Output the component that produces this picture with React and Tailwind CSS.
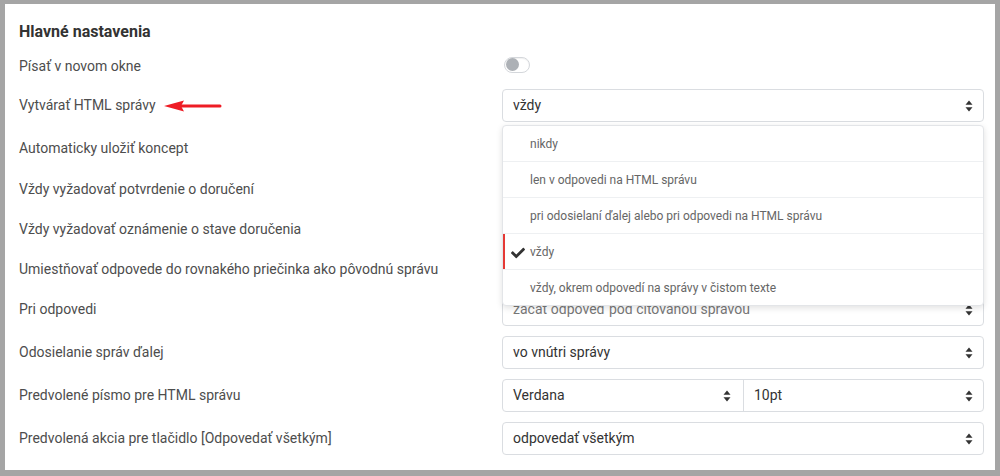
import React from "react";
import { FaCheck } from "react-icons/fa";

function SortIcon() {
  return (
    <svg width="8" height="12" viewBox="0 0 8 12" className="shrink-0">
      <path d="M4 0.5 L7.5 4.8 L0.5 4.8 Z" fill="#333" />
      <path d="M4 11.5 L7.5 7.2 L0.5 7.2 Z" fill="#333" />
    </svg>
  );
}

function Select({ value, className = "" }) {
  return (
    <div
      className={
        "flex h-[33px] w-full items-center justify-between rounded-[4px] border border-[#dadde1] bg-white pl-[10px] pr-[10px] text-[14px] text-[#333] " +
        className
      }
    >
      <span>{value}</span>
      <SortIcon />
    </div>
  );
}

function Toggle() {
  return (
    <div className="flex h-[16px] w-[26px] items-center rounded-full border border-[#d4d7db] bg-white pl-[1px] shadow-[inset_0_1px_1px_rgba(0,0,0,0.06)]">
      <div className="h-[13px] w-[13px] rounded-full bg-[#adb1b6]" />
    </div>
  );
}

function Row({ label, children, h, select = false, extra = null }) {
  return (
    <div className={"flex items-center " + h}>
      <div
        className={
          "w-[483px] shrink-0 text-[14px] text-[#4d4d4d] " +
          (select ? "" : "pt-[3px]")
        }
      >
        {label}
        {extra}
      </div>
      <div className="relative w-[482px] shrink-0">{children}</div>
    </div>
  );
}

const menuItems = [
  "nikdy",
  "len v odpovedi na HTML správu",
  "pri odosielaní ďalej alebo pri odpovedi na HTML správu",
  "vždy",
  "vždy, okrem odpovedí na správy v čistom texte",
];

function Menu() {
  return (
    <div className="absolute left-0 top-full z-10 mt-[3px] w-[482px] overflow-hidden rounded-[4px] border border-[#e3e5e8] bg-white shadow-[0_2px_6px_rgba(0,0,0,0.12)]">
      {menuItems.map((t, i) => {
        const sel = i === 3;
        return (
          <div
            key={i}
            className={
              "relative flex items-center pl-[27px] text-[12px] text-[#666] " +
              (i < 4 ? "h-[36px] border-b border-[#eef0f2] " : "h-[35px] ") +
              (i === 1 || i === 2 ? "h-[35px]" : "")
            }
          >
            {sel && (
              <>
                <div className="absolute bottom-0 left-0 top-0 w-[2px] bg-[#e53935]" />
                <FaCheck className="absolute left-[8px] top-[12px] text-[14px] text-[#333]" />
              </>
            )}
            {t}
          </div>
        );
      })}
    </div>
  );
}

export default function App() {
  return (
    <div
      className="h-[476px] w-[1000px] overflow-hidden bg-[#a5a5a5] pl-[5px] pt-[4px]"
      style={{ fontFamily: "Roboto, 'Noto Sans', sans-serif" }}
    >
      <div className="h-[466px] w-[990px] bg-white pl-[14px] pt-[16px]">
        <h2 className="mb-[1px] h-[24px] text-[16px] font-bold leading-[24px] text-[#333]">
          Hlavné nastavenia
        </h2>

        <Row label="Písať v novom okne" h="h-[39px]">
          <div className="pl-[2px]">
            <Toggle />
          </div>
        </Row>

        <Row
          label="Vytvárať HTML správy"
          h="h-[43px]"
          select
          extra={
            <svg
              width="60"
              height="12"
              viewBox="0 0 60 12"
              className="ml-[7px] inline-block align-middle"
            >
              <path d="M1 6 L21 0.5 L18 6 L21 11.5 Z" fill="#ee1c25" />
              <path
                d="M15 6 L57 6"
                stroke="#ee1c25"
                strokeWidth="3"
                strokeLinecap="round"
              />
            </svg>
          }
        >
          <Select value="vždy" />
          <Menu />
        </Row>

        <Row label="Automaticky uložiť koncept" h="h-[40px]">
          <div className="pl-[2px]">
            <Toggle />
          </div>
        </Row>
        <Row label="Vždy vyžadovať potvrdenie o doručení" h="h-[41px]">
          <div className="pl-[2px]">
            <Toggle />
          </div>
        </Row>
        <Row label="Vždy vyžadovať oznámenie o stave doručenia" h="h-[40px]">
          <div className="pl-[2px]">
            <Toggle />
          </div>
        </Row>
        <Row
          label="Umiestňovať odpovede do rovnakého priečinka ako pôvodnú správu"
          h="h-[40px]"
        >
          <div className="pl-[2px]">
            <Toggle />
          </div>
        </Row>

        <Row label="Pri odpovedi" h="h-[43px]" select>
          <Select value="začať odpoveď pod citovanou správou" className="text-[#777]" />
        </Row>
        <Row label="Odosielanie správ ďalej" h="h-[43px]" select>
          <Select value="vo vnútri správy" />
        </Row>
        <Row label="Predvolené písmo pre HTML správu" h="h-[43px]" select>
          <div className="flex h-[33px] w-full rounded-[4px] border border-[#dadde1] text-[14px] text-[#333]">
            <div className="flex w-[241px] items-center justify-between border-r border-[#dadde1] pl-[10px] pr-[12px]">
              <span>Verdana</span>
              <SortIcon />
            </div>
            <div className="flex flex-1 items-center justify-between pl-[10px] pr-[10px]">
              <span>10pt</span>
              <SortIcon />
            </div>
          </div>
        </Row>
        <Row
          label="Predvolená akcia pre tlačidlo [Odpovedať všetkým]"
          h="h-[43px]"
          select
        >
          <Select value="odpovedať všetkým" />
        </Row>
      </div>
    </div>
  );
}
